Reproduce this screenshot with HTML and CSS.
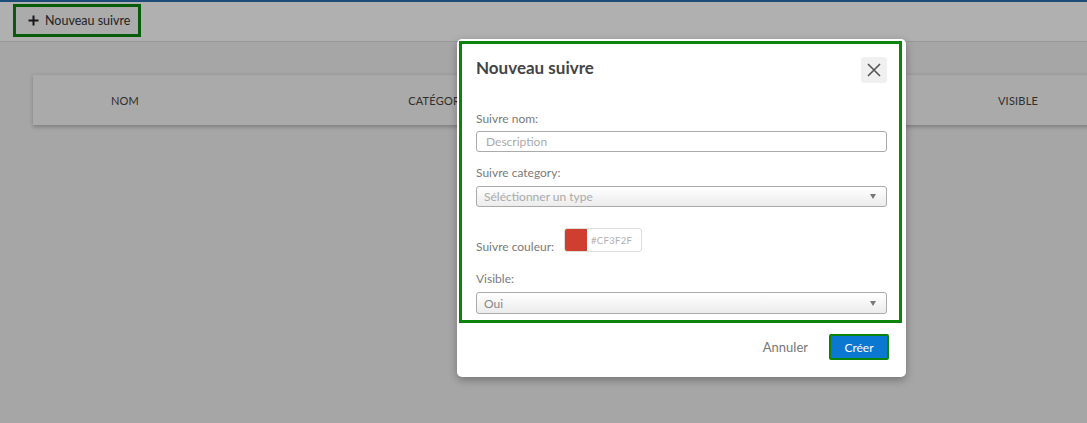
FILE: index.html
```html
<!DOCTYPE html>
<html lang="fr">
<head>
<meta charset="utf-8">
<title>Nouveau suivre</title>
<link rel="stylesheet" href="styles.css">
</head>
<body>
<div class="page">
  <header class="topbar">
    <button class="new-btn" type="button">
      <svg class="plus" width="11" height="11" viewBox="0 0 11 11"><path d="M5.5 0.5v10M0.5 5.5h10" stroke="#222" stroke-width="2"/></svg>
      <span>Nouveau suivre</span>
    </button>
  </header>
  <main class="content">
    <div class="table-head">
      <div class="th th-name">NOM</div>
      <div class="th th-cat">CATÉGORIE</div>
      <div class="th th-color">COULEUR</div>
      <div class="th th-vis">VISIBLE</div>
    </div>
  </main>
</div>
<div class="overlay"></div>
<div class="modal">
  <div class="modal-body">
    <div class="modal-header">
      <h2 class="modal-title">Nouveau suivre</h2>
      <button class="close-btn" type="button" aria-label="Fermer">
        <svg width="14" height="14" viewBox="0 0 14 14"><path d="M1 1L13 13M13 1L1 13" stroke="#555" stroke-width="1.6"/></svg>
      </button>
    </div>
    <div class="field field-name">
      <label class="lbl">Suivre nom:</label>
      <div class="input"><span class="ph">Description</span></div>
    </div>
    <div class="field field-cat">
      <label class="lbl">Suivre category:</label>
      <div class="select"><span class="ph">Séléctionner un type</span><span class="caret"></span></div>
    </div>
    <div class="color-row">
      <label class="lbl lbl-color">Suivre couleur:</label>
      <div class="color-box">
        <span class="swatch"></span>
        <span class="hex">#CF3F2F</span>
      </div>
    </div>
    <div class="field field-vis">
      <label class="lbl">Visible:</label>
      <div class="select"><span class="val">Oui</span><span class="caret"></span></div>
    </div>
  </div>
  <div class="modal-footer">
    <button class="cancel-btn" type="button">Annuler</button>
    <button class="create-btn" type="button">Créer</button>
  </div>
</div>
</body>
</html>
```
FILE: styles.css
```css
* { box-sizing: border-box; }
html, body { margin: 0; padding: 0; }
body {
  width: 1087px;
  height: 423px;
  overflow: hidden;
  background: #f1f1f1;
  font-family: Lato, "Open Sans", sans-serif;
  position: relative;
}
.page { width: 1087px; }
.topbar {
  height: 42px;
  background: #ffffff;
  border-top: 2px solid #2a6fb0;
  border-bottom: 1px solid #dcdcdc;
  padding: 2px 0 0 13px;
}
.new-btn {
  display: flex;
  align-items: center;
  gap: 6px;
  height: 33px;
  width: 128px;
  padding: 0 0 0 12px;
  border: 3px solid #0c840c;
  background: #f8f8f8;
  font-family: Lato, sans-serif;
  font-size: 12.5px;
  color: #333;
  cursor: pointer;
}
.plus { flex: none; }
.content { padding: 32px 0 0 33px; }
.table-head {
  width: 1100px;
  height: 51px;
  background: #f7f7f7;
  border-top: 1px solid #e4e4e4;
  box-shadow: 0 2px 4px rgba(0,0,0,0.25);
  display: flex;
  align-items: center;
}
.th {
  font-size: 11px;
  color: #444;
  text-align: center;
  letter-spacing: 0.2px;
}
.th-name { width: 184px; }
.th-cat { width: 444px; }
.th-color { width: 242px; }
.th-vis { width: 230px; }
.overlay {
  position: absolute;
  inset: 0;
  background: rgba(0,0,0,0.31);
}
.modal {
  position: absolute;
  left: 457px;
  top: 39px;
  width: 449px;
  height: 338px;
  background: #fff;
  border-radius: 5px;
  box-shadow: 0 3px 9px rgba(0,0,0,0.3);
  padding: 2px 4px 0 2px;
}
.modal-body {
  border: 3px solid #0c840c;
  height: 282px;
  padding: 13px 12px 0 14px;
}
.modal-header {
  display: flex;
  align-items: center;
  justify-content: space-between;
  height: 26px;
}
.modal-title {
  margin: 0;
  font-size: 17px;
  font-weight: 700;
  color: #444;
  line-height: 20px;
  position: relative;
  top: -2px;
}
.close-btn {
  width: 26px;
  height: 26px;
  border: none;
  border-radius: 3px;
  background: #f0f0f0;
  display: flex;
  align-items: center;
  justify-content: center;
  padding: 0;
}
.lbl {
  display: block;
  font-size: 12px;
  line-height: 15px;
  color: #7a7a7a;
}
.field { display: flex; flex-direction: column; gap: 5px; }
.field-name { margin-top: 28px; }
.field-cat { margin-top: 13px; gap: 6px; }
.field-vis { margin-top: 19px; gap: 6px; }
.input, .select {
  height: 21px;
  border: 1px solid #aaa;
  border-radius: 3px;
  display: flex;
  align-items: center;
  font-size: 12px;
}
.input { padding-left: 9px; background: #fff; }
.select {
  padding: 0 10px 0 7px;
  justify-content: space-between;
  background: linear-gradient(#ffffff, #ececec);
}
.field-vis .select { height: 22px; }
.ph { color: #aaa; }
.val { color: #888; }
.caret {
  width: 0;
  height: 0;
  border-left: 3px solid transparent;
  border-right: 3px solid transparent;
  border-top: 5px solid #777;
}
.color-row {
  display: flex;
  align-items: flex-end;
  gap: 10px;
  margin-top: 21px;
}
.lbl-color { position: relative; top: 2px; }
.color-box {
  display: flex;
  height: 24px;
  width: 78px;
  border: 1px solid #ddd;
  border-radius: 3px;
  overflow: hidden;
}
.swatch { width: 23px; background: #cf3f2f; margin: -1px 0 -1px -1px; }
.hex {
  font-size: 9.5px;
  color: #b0b0b0;
  letter-spacing: 0.3px;
  padding: 6px 0 0 4px;
}
.modal-footer {
  display: flex;
  justify-content: flex-end;
  align-items: center;
  gap: 21px;
  padding: 11px 13px 0 0;
}
.cancel-btn {
  border: none;
  background: none;
  font-family: Lato, sans-serif;
  font-size: 13px;
  color: #777;
  padding: 0;
}
.create-btn {
  width: 60px;
  height: 26px;
  border: 2px solid #0c840c;
  background: #0a78d0;
  color: #fff;
  font-family: Lato, sans-serif;
  font-size: 12px;
  border-radius: 2px;
  padding: 0;
}
```
